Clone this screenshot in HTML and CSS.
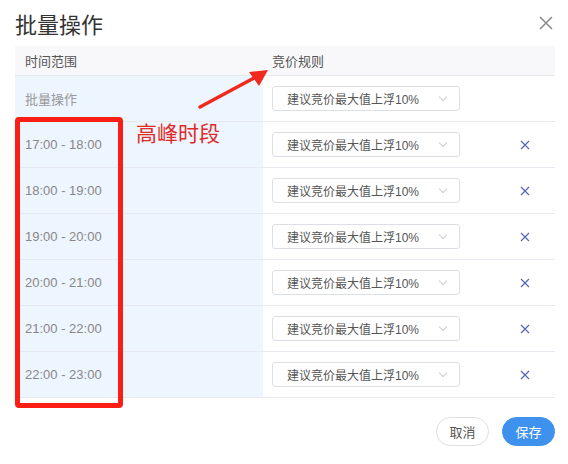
FILE: index.html
```html
<!DOCTYPE html>
<html lang="zh-CN">
<head>
  <meta charset="UTF-8" />
  <meta name="viewport" content="width=device-width, initial-scale=1.0" />
  <title>批量操作</title>
  <link rel="stylesheet" href="styles.css">
</head>

<body>
  <div class="dialog">
    <div class="dialog-header">
      <h2>批量操作</h2>
      <span class="close">
        <svg width="14" height="14" viewBox="0 0 14 14"><path d="M1 1L13 13M13 1L1 13" stroke="#8c8c8c" stroke-width="1.6" fill="none"/></svg>
      </span>
    </div>

    <div class="table">
      <div class="row head">
        <div class="cell time">时间范围</div>
        <div class="cell rule">竞价规则</div>
        <div class="cell op"></div>
      </div>
      <div class="row">
        <div class="cell time muted">批量操作</div>
        <div class="cell rule"><div class="select"><span>建议竞价最大值上浮10%</span><i class="arrow"></i></div></div>
        <div class="cell op"></div>
      </div>
      <div class="row">
        <div class="cell time">17:00 - 18:00</div>
        <div class="cell rule"><div class="select"><span>建议竞价最大值上浮10%</span><i class="arrow"></i></div></div>
        <div class="cell op"><svg class="del" width="10" height="10" viewBox="0 0 10 10"><path d="M1 1L9 9M9 1L1 9"/></svg></div>
      </div>
      <div class="row">
        <div class="cell time">18:00 - 19:00</div>
        <div class="cell rule"><div class="select"><span>建议竞价最大值上浮10%</span><i class="arrow"></i></div></div>
        <div class="cell op"><svg class="del" width="10" height="10" viewBox="0 0 10 10"><path d="M1 1L9 9M9 1L1 9"/></svg></div>
      </div>
      <div class="row">
        <div class="cell time">19:00 - 20:00</div>
        <div class="cell rule"><div class="select"><span>建议竞价最大值上浮10%</span><i class="arrow"></i></div></div>
        <div class="cell op"><svg class="del" width="10" height="10" viewBox="0 0 10 10"><path d="M1 1L9 9M9 1L1 9"/></svg></div>
      </div>
      <div class="row">
        <div class="cell time">20:00 - 21:00</div>
        <div class="cell rule"><div class="select"><span>建议竞价最大值上浮10%</span><i class="arrow"></i></div></div>
        <div class="cell op"><svg class="del" width="10" height="10" viewBox="0 0 10 10"><path d="M1 1L9 9M9 1L1 9"/></svg></div>
      </div>
      <div class="row">
        <div class="cell time">21:00 - 22:00</div>
        <div class="cell rule"><div class="select"><span>建议竞价最大值上浮10%</span><i class="arrow"></i></div></div>
        <div class="cell op"><svg class="del" width="10" height="10" viewBox="0 0 10 10"><path d="M1 1L9 9M9 1L1 9"/></svg></div>
      </div>
      <div class="row">
        <div class="cell time">22:00 - 23:00</div>
        <div class="cell rule"><div class="select"><span>建议竞价最大值上浮10%</span><i class="arrow"></i></div></div>
        <div class="cell op"><svg class="del" width="10" height="10" viewBox="0 0 10 10"><path d="M1 1L9 9M9 1L1 9"/></svg></div>
      </div>
    </div>

    <div class="dialog-footer">
      <button class="btn">取消</button>
      <button class="btn primary">保存</button>
    </div>

    <!-- 标注 -->
    <div class="mark-box"></div>
    <div class="mark-text">高峰时段</div>
    <svg class="mark-arrow" width="80" height="60" viewBox="0 0 80 60">
      <path d="M4 55L58 26" stroke="#f22a1e" stroke-width="3.5" stroke-linecap="round" fill="none"/>
      <path d="M72 18L53 20L63 34Z" fill="#f22a1e"/>
    </svg>
  </div>
</body>
</html>
```

FILE: styles.css
```css
* {
  box-sizing: border-box;
}

body {
  margin: 0;
  background: #fff;
  font-family: "Liberation Sans", "Noto Sans CJK SC", sans-serif;
  color: #555;
}

.dialog {
  position: relative;
  width: 568px;
  height: 464px;
  padding: 0 13px 0 15px;
}

.dialog-header {
  display: flex;
  justify-content: space-between;
  align-items: center;
  height: 46px;
}

.dialog-header h2 {
  margin: 0;
  font-size: 22px;
  font-weight: normal;
  color: #333;
  font-family: "Noto Sans CJK SC", sans-serif;
}

.close {
  display: flex;
  margin-right: 2px;
}

.row {
  display: grid;
  grid-template-columns: 248px 1fr 60px;
  height: 46px;
  border-bottom: 1px solid #e6e9ef;
}

.row.head {
  height: 30px;
  background: #f8f8fb;
}

.cell {
  display: flex;
  align-items: center;
  font-size: 13px;
}

.cell.time {
  padding-left: 10px;
  background: #edf5fe;
  color: #888;
}

.head .cell.time {
  background: transparent;
  color: #555;
}

.cell.muted {
  color: #999;
  font-family: "Noto Sans CJK SC", sans-serif;
}

.head .cell {
  font-family: "Noto Sans CJK SC", sans-serif;
}

.cell.rule {
  padding-left: 9px;
}

.cell.op {
  justify-content: center;
}

.select {
  width: 188px;
  height: 25px;
  border: 1px solid #dcdfe6;
  border-radius: 3px;
  display: flex;
  align-items: center;
  justify-content: space-between;
  padding: 0 13px 0 14px;
  font-size: 12px;
  color: #555;
}

.select .arrow {
  width: 6px;
  height: 6px;
  border-right: 1px solid #c8ccd4;
  border-bottom: 1px solid #c8ccd4;
  transform: rotate(45deg);
  margin-top: -4px;
}

.del path {
  stroke: #5366ba;
  stroke-width: 1.2;
  fill: none;
}

.dialog-footer {
  display: flex;
  justify-content: flex-end;
  gap: 13px;
  padding-top: 19px;
}

.btn {
  height: 29px;
  width: 53px;
  border-radius: 15px;
  border: 1px solid #dcdfe6;
  background: #fff;
  color: #555;
  font-size: 13px;
  font-family: "Noto Sans CJK SC", sans-serif;
  padding: 0;
}

.btn.primary {
  background: #3f91ee;
  border-color: #3f91ee;
  color: #fff;
}

/* 标注 */
.mark-box {
  position: absolute;
  left: 15px;
  top: 117px;
  width: 108px;
  height: 291px;
  border: 5px solid #fa1e14;
  border-radius: 4px;
}

.mark-text {
  position: absolute;
  left: 136px;
  top: 117px;
  font-size: 21px;
  color: #e02a2a;
  font-family: "Noto Sans CJK SC", sans-serif;
}

.mark-arrow {
  position: absolute;
  left: 196px;
  top: 52px;
}
```
